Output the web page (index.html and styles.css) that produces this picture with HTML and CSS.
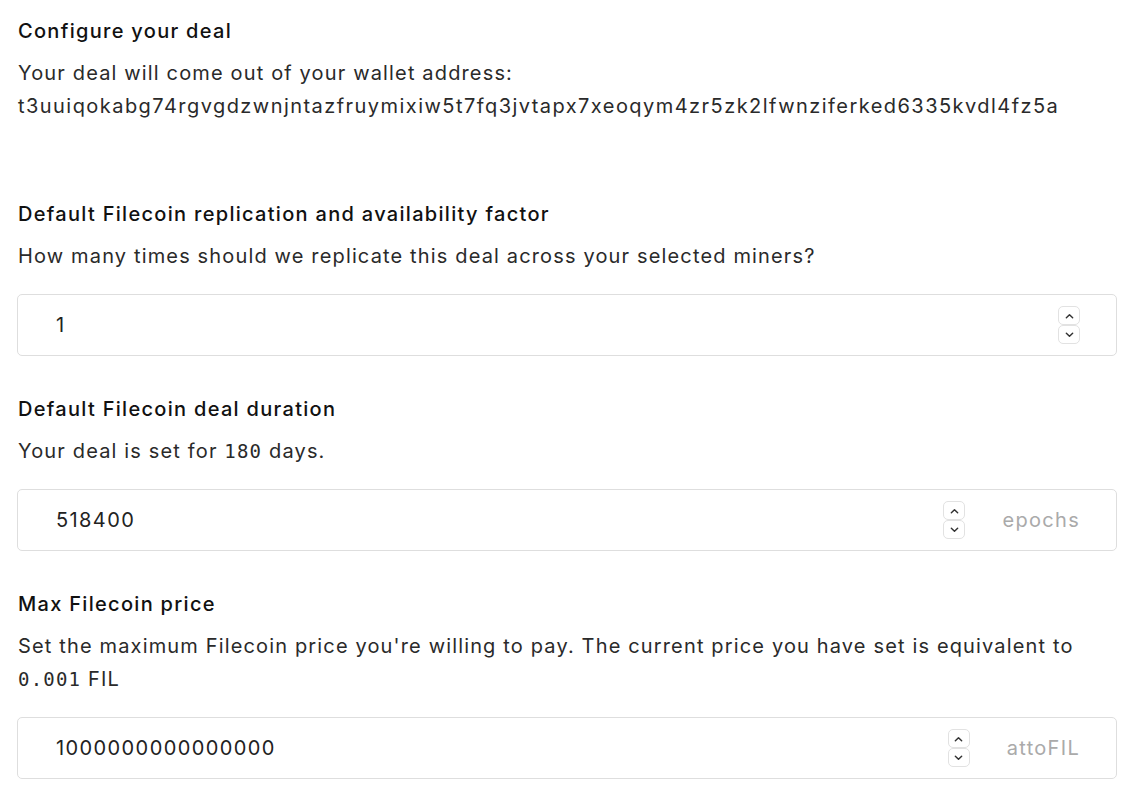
FILE: index.html
```html
<!DOCTYPE html>
<html>
<head>
<meta charset="utf-8">
<link rel="stylesheet" href="styles.css">
</head>
<body>
<div class="page">
  <section class="block first">
    <h2 class="title">Configure your deal</h2>
    <p class="desc">Your deal will come out of your wallet address:<br><span class="address">t3uuiqokabg74rgvgdzwnjntazfruymixiw5t7fq3jvtapx7xeoqym4zr5zk2lfwnziferked6335kvdl4fz5a</span></p>
  </section>

  <section class="block spaced">
    <h2 class="title">Default Filecoin replication and availability factor</h2>
    <p class="desc">How many times should we replicate this deal across your selected miners?</p>
    <div class="field">
      <span class="value">1</span>
      <span class="spinner">
        <span class="step"><svg viewBox="0 0 10 6" width="9" height="6"><path d="M1.5 5 L5 1.5 L8.5 5" fill="none" stroke="#333" stroke-width="1.6" stroke-linecap="round" stroke-linejoin="round"/></svg></span>
        <span class="step"><svg viewBox="0 0 10 6" width="9" height="6"><path d="M1.5 1 L5 4.5 L8.5 1" fill="none" stroke="#333" stroke-width="1.6" stroke-linecap="round" stroke-linejoin="round"/></svg></span>
      </span>
    </div>
  </section>

  <section class="block">
    <h2 class="title">Default Filecoin deal duration</h2>
    <p class="desc">Your deal is set for <code class="mono">180</code> days.</p>
    <div class="field">
      <span class="value">518400</span>
      <span class="spinner">
        <span class="step"><svg viewBox="0 0 10 6" width="9" height="6"><path d="M1.5 5 L5 1.5 L8.5 5" fill="none" stroke="#333" stroke-width="1.6" stroke-linecap="round" stroke-linejoin="round"/></svg></span>
        <span class="step"><svg viewBox="0 0 10 6" width="9" height="6"><path d="M1.5 1 L5 4.5 L8.5 1" fill="none" stroke="#333" stroke-width="1.6" stroke-linecap="round" stroke-linejoin="round"/></svg></span>
      </span>
      <span class="unit">epochs</span>
    </div>
  </section>

  <section class="block">
    <h2 class="title">Max Filecoin price</h2>
    <p class="desc">Set the maximum Filecoin price you're willing to pay. The current price you have set is equivalent to <code class="mono">0.001</code> FIL</p>
    <div class="field">
      <span class="value">1000000000000000</span>
      <span class="spinner">
        <span class="step"><svg viewBox="0 0 10 6" width="9" height="6"><path d="M1.5 5 L5 1.5 L8.5 5" fill="none" stroke="#333" stroke-width="1.6" stroke-linecap="round" stroke-linejoin="round"/></svg></span>
        <span class="step"><svg viewBox="0 0 10 6" width="9" height="6"><path d="M1.5 1 L5 4.5 L8.5 1" fill="none" stroke="#333" stroke-width="1.6" stroke-linecap="round" stroke-linejoin="round"/></svg></span>
      </span>
      <span class="unit">attoFIL</span>
    </div>
  </section>
</div>
</body>
</html>
```

FILE: styles.css
```css
html, body {
  margin: 0;
  padding: 0;
  background: #fff;
}

.page {
  width: 1100px;
  padding: 17px 0 0 17px;
  font-family: Inter, "Noto Sans", sans-serif;
  color: #222;
}

.block {
  display: flex;
  flex-direction: column;
  margin-top: 39px;
}

.block.first {
  margin-top: 0;
}

.block.spaced {
  margin-top: 77px;
}

.title {
  margin: 0;
  font-size: 20px;
  line-height: 28px;
  font-weight: 500;
  letter-spacing: 1.3px;
  color: #111;
  padding-left: 1px;
}

.desc {
  margin: 12px 0 0 0;
  font-size: 20px;
  line-height: 33px;
  font-weight: 400;
  letter-spacing: 1.15px;
  color: #2a2a2a;
  padding-left: 1px;
}

.address {
  letter-spacing: 1.45px;
}

.mono {
  font-family: "DejaVu Sans Mono", monospace;
  font-size: 19px;
  letter-spacing: 1.2px;
}

.field {
  margin-top: 21px;
  height: 60px;
  border: 1px solid #dedede;
  border-radius: 5px;
  display: flex;
  align-items: center;
  padding: 0 36px 0 38px;
}

.value {
  flex: 1;
  font-size: 20px;
  letter-spacing: 1.4px;
  color: #222;
}

.spinner {
  display: flex;
  flex-direction: column;
}

.step {
  width: 20px;
  height: 17px;
  border: 1px solid #e2e2e2;
  border-radius: 5px;
  display: flex;
  align-items: center;
  justify-content: center;
}

.unit {
  margin-left: 37px;
  font-size: 20px;
  letter-spacing: 1.3px;
  color: #aaa;
}
```
